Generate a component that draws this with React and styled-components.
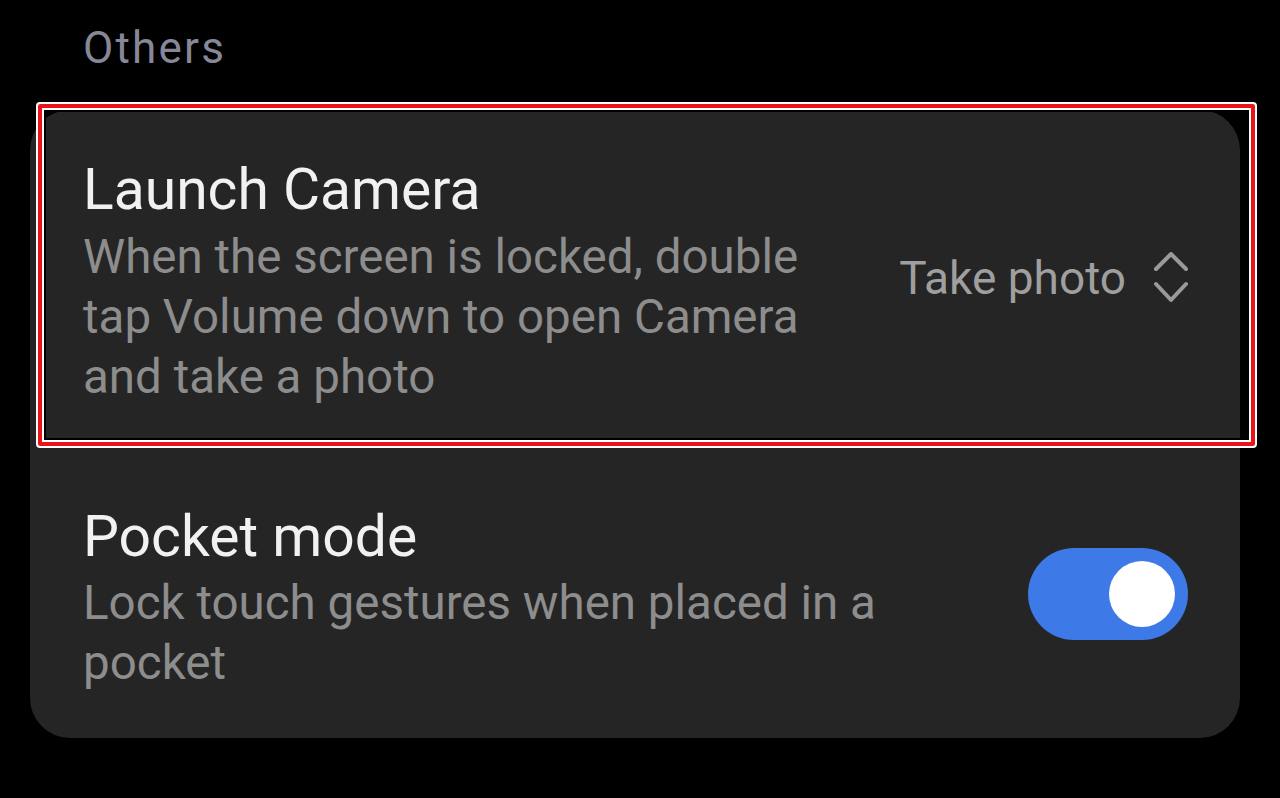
import React from "react";
import styled, { createGlobalStyle } from "styled-components";

const Global = createGlobalStyle`
  html, body { margin: 0; padding: 0; background: #000; }
  body { font-family: Roboto, "Noto Sans", sans-serif; }
`;

const Page = styled.div`
  width: 1280px;
  height: 798px;
  background: #000;
  overflow: hidden;
  display: flex;
  flex-direction: column;
`;

const SectionHeader = styled.div`
  padding: 22px 0 0 83px;
  height: 110px;
  box-sizing: border-box;
  font-size: 44px;
  letter-spacing: 2.2px;
  line-height: 52px;
  color: #878797;
`;

const Card = styled.div`
  margin-left: 30px;
  width: 1210px;
  background: #252525;
  border-radius: 40px;
  display: flex;
  flex-direction: column;
`;

const Row = styled.div`
  position: relative;
  display: flex;
  align-items: center;
  padding: ${(p) => p.$pad};
  padding-left: 53px;
  padding-right: 52px;
`;

const TextCol = styled.div`
  flex: 1;
  max-width: ${(p) => p.$max}px;
`;

const Title = styled.div`
  font-size: 57px;
  line-height: 64px;
  color: #f1f1f1;
`;

const Sub = styled.div`
  margin-top: ${(p) => p.$mt}px;
  font-size: 47.5px;
  line-height: 60px;
  color: #8d8d8d;
`;

const Value = styled.div`
  margin-left: auto;
  margin-bottom: 10px;
  display: flex;
  align-items: center;
  gap: 28px;
  font-size: 46px;
  color: #9f9f9f;
`;

const Highlight = styled.div`
  position: absolute;
  left: 6px;
  top: -8px;
  right: -17px;
  bottom: 0;
  border: 2px solid #fff;
  border-radius: 4px;
  box-shadow: inset 0 0 0 4px #e8141a, inset 0 0 0 6px #fff, inset 0 0 0 8px #000;
  pointer-events: none;
`;

const Toggle = styled.div`
  margin-left: auto;
  margin-bottom: 10px;
  width: 160px;
  height: 92px;
  border-radius: 46px;
  background: #3d79e7;
  display: flex;
  align-items: center;
  justify-content: flex-end;
  padding-right: 13px;
  box-sizing: border-box;
  flex-shrink: 0;
`;

const Knob = styled.div`
  width: 66px;
  height: 66px;
  border-radius: 50%;
  background: #fff;
`;

const Chevrons = () => (
  <svg width="34" height="52" viewBox="0 0 34 52" fill="none" stroke="#9a9a9a" strokeWidth="4" strokeLinecap="round" strokeLinejoin="round">
    <path d="M2 17 L17 2 L32 17" />
    <path d="M2 32 L17 48 L32 32" />
  </svg>
);

export default function App() {
  return (
    <Page>
      <Global />
      <SectionHeader>Others</SectionHeader>
      <Card>
        <Row $pad="48px 0 41px">
          <TextCol $max={760}>
            <Title>Launch Camera</Title>
            <Sub $mt={5}>
              When the screen is locked, double tap Volume down to open Camera and take a photo
            </Sub>
          </TextCol>
          <Value>
            Take photo
            <Chevrons />
          </Value>
          <Highlight />
        </Row>
        <Row $pad="57px 0 45px">
          <TextCol $max={910}>
            <Title>Pocket mode</Title>
            <Sub $mt={4}>Lock touch gestures when placed in a pocket</Sub>
          </TextCol>
          <Toggle>
            <Knob />
          </Toggle>
        </Row>
      </Card>
    </Page>
  );
}
